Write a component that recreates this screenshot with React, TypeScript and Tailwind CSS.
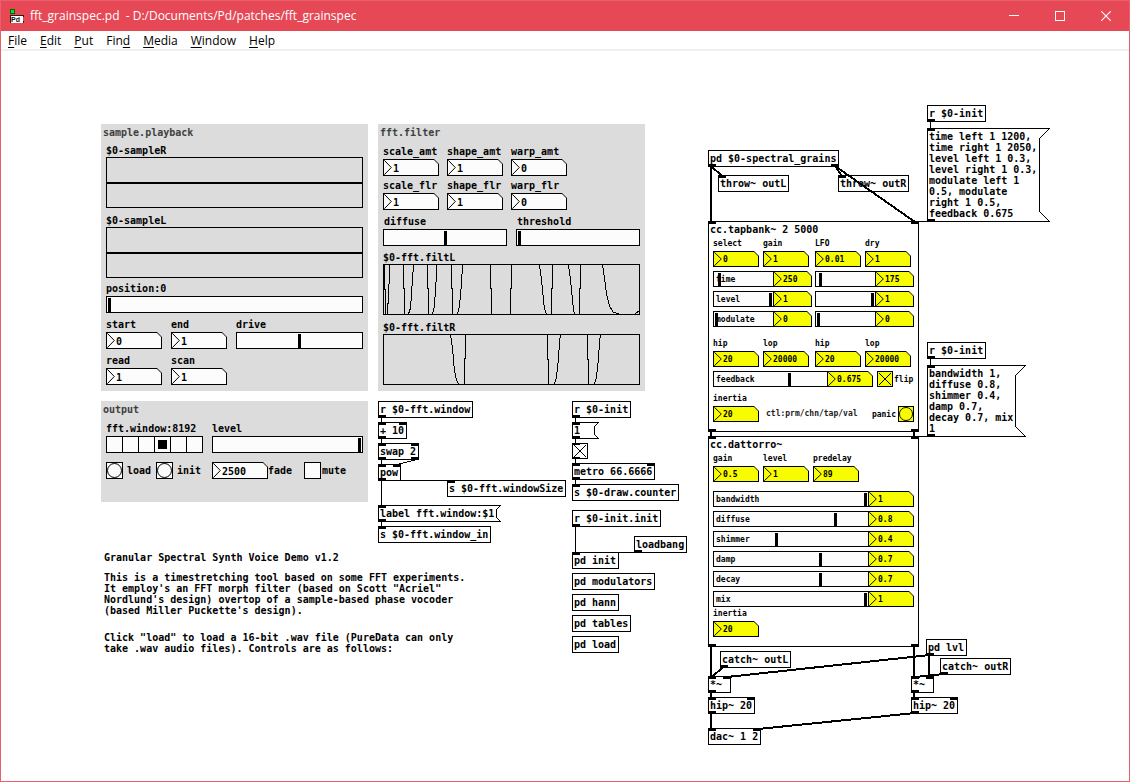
import { useId, type ReactNode } from "react";

type Tone = "plain" | "yellow";

const MENUS: [string, string, string][] = [
  ["", "F", "ile"],
  ["", "E", "dit"],
  ["", "P", "ut"],
  ["Fin", "d", ""],
  ["", "M", "edia"],
  ["", "W", "indow"],
  ["", "H", "elp"],
];

function AppIcon() {
  return (
    <svg width="14" height="15" viewBox="0 0 14 15" aria-hidden="true" shapeRendering="crispEdges">
      <rect x="0.5" y="0.5" width="4" height="4" fill="#00e800" stroke="#0b5c12" />
      <rect x="1" y="6" width="12" height="8" fill="#ffffff" />
      <path d="M0.5 14V6.500H13.5V8M13.500 12V14" fill="none" stroke="#2a1a1a" />
      <text x="1" y="13" fontSize="7" fontWeight="700" fontFamily="'Liberation Sans', sans-serif" fill="#111111">
        Pd
      </text>
    </svg>
  );
}

function TitleBar() {
  const control = "flex w-[46px] items-center justify-center";
  return (
    <header className="flex h-[30px] shrink-0 bg-[#e74856] text-white">
      <div className="flex min-w-0 flex-1 items-center gap-[6px] pl-[9px]">
        <AppIcon />
        <h1 className="truncate whitespace-pre text-[12px] leading-4">
          {"fft_grainspec.pd  - D:/Documents/Pd/patches/fft_grainspec"}
        </h1>
      </div>
      <button className={control} aria-label="Minimize">
        <svg width="10" height="10" stroke="white" shapeRendering="crispEdges">
          <path d="M0 4.500H10" />
        </svg>
      </button>
      <button className={control} aria-label="Maximize">
        <svg width="10" height="10" stroke="white" fill="none" shapeRendering="crispEdges">
          <rect x="0.5" y="0.5" width="9" height="9" />
        </svg>
      </button>
      <button className={control} aria-label="Close">
        <svg width="10" height="10" stroke="white" fill="none">
          <path d="M0.300 0.300L9.700 9.700M9.700 0.300L0.300 9.700" strokeWidth="1.100" />
        </svg>
      </button>
    </header>
  );
}

function MenuBar() {
  return (
    <nav className="flex h-5 shrink-0 items-center gap-[13px] border-b-2 border-[#f0f0f0] bg-white pl-[7px] pt-[2px] text-[12px] leading-4 text-black">
      {MENUS.map(([before, key, after]) => (
        <button key={before + key + after}>
          {before}
          <span className="underline underline-offset-2">{key}</span>
          {after}
        </button>
      ))}
    </nav>
  );
}

function Ports({ count, side }: { count: number; side: "in" | "out" }) {
  return (
    <span
      className={`pointer-events-none absolute -inset-x-px flex justify-between ${
        side === "in" ? "-top-px" : "-bottom-px"
      }`}
    >
      {Array.from({ length: count }, (_, i) => (
        <span key={i} className="h-[3px] w-2 bg-black" />
      ))}
    </span>
  );
}

interface ObjProps {
  at: string;
  ins?: number;
  outs?: number;
  children: ReactNode;
}

function Obj({ at, ins = 0, outs = 0, children }: ObjProps) {
  return (
    <div className={`absolute h-[17px] min-w-[23px] whitespace-nowrap border border-black pl-px pr-[2px] leading-[15px] ${at}`}>
      {children}
      <Ports count={ins} side="in" />
      <Ports count={outs} side="out" />
    </div>
  );
}

interface MsgProps {
  at: string;
  w: number;
  h: number;
  notch: number;
  children: ReactNode;
}

function Msg({ at, w, h, notch, children }: MsgProps) {
  const r = w - 0.5;
  const b = h - 0.5;
  return (
    <button className={`absolute border border-transparent text-left ${at}`}>
      <svg className="absolute -left-px -top-px" width={w} height={h} fill="none" stroke="black" shapeRendering="crispEdges">
        <path d={`M${r} 0.500H0.500V${b}H${r}L${r - notch} ${b - notch}V${notch + 0.5}Z`} />
      </svg>
      <span className="relative block whitespace-pre pl-px">{children}</span>
      <Ports count={1} side="in" />
      <span className="absolute -bottom-px -left-px h-[3px] w-2 bg-black" />
    </button>
  );
}

function NumberBox({ id, label, value, size, tone = "plain" }: { id?: string; label?: string; value: string; size: string; tone?: Tone }) {
  return (
    <span
      className={`relative block shrink-0 bg-black p-px [clip-path:polygon(0_0,calc(100%-5px)_0,100%_5px,100%_100%,0_100%)] ${size}`}
    >
      <span
        className={`flex h-full [clip-path:polygon(0_0,calc(100%-4px)_0,100%_4px,100%_100%,0_100%)] ${
          tone === "yellow" ? "bg-[#f8fc00]" : "bg-[#fcfcfc]"
        }`}
      >
        <svg className="h-full w-2 shrink-0" viewBox="0 0 8 15" preserveAspectRatio="none" fill="none" stroke="black" strokeWidth="1">
          <path d="M0.300 0.300L7.300 7.500L0.300 14.700" />
        </svg>
        <input
          id={id}
          aria-label={label}
          defaultValue={value}
          className="h-full w-full min-w-0 bg-transparent pl-px pt-px leading-none outline-none"
        />
      </span>
    </span>
  );
}

interface SliderProps {
  id?: string;
  label?: string;
  max: number;
  pos: number;
  small?: boolean;
}

function Slider({ id, label, max, pos, small = false }: SliderProps) {
  return (
    <input
      id={id}
      aria-label={label}
      type="range"
      min={0}
      max={max}
      defaultValue={pos}
      className={`m-0 block appearance-none border border-black bg-[#fcfcfc] [&::-webkit-slider-thumb]:w-[3px] [&::-webkit-slider-thumb]:appearance-none [&::-webkit-slider-thumb]:bg-black ${
        small
          ? "-mr-px h-4 min-w-0 flex-1 [&::-webkit-slider-thumb]:h-[13px]"
          : "h-[17px] w-full [&::-webkit-slider-thumb]:h-[14px]"
      }`}
    />
  );
}

function Toggle({ id, label, on = false, size, color }: { id?: string; label?: string; on?: boolean; size: string; color: string }) {
  return (
    <span className={`relative block shrink-0 ${size}`}>
      <input
        id={id}
        aria-label={label}
        type="checkbox"
        defaultChecked={on}
        className={`peer m-0 block size-full appearance-none border border-black ${color}`}
      />
      <svg
        className="pointer-events-none absolute inset-0 hidden size-full peer-checked:block"
        viewBox="0 0 16 16"
        stroke="black"
        shapeRendering="crispEdges"
      >
        <path d="M2 2L14 14M14 2L2 14" />
      </svg>
    </span>
  );
}

function Bang({ label, size, color }: { label: string; size: string; color: string }) {
  return (
    <button aria-label={label} className={`block shrink-0 border border-black ${size} ${color}`}>
      <svg className="block size-full" viewBox="0 0 15 15" fill="none" stroke="black">
        <circle cx="7.500" cy="7.500" r="7" />
      </svg>
    </button>
  );
}

interface FieldProps {
  label: string;
  children: (id: string) => ReactNode;
  className?: string;
  labelClass?: string;
}

function Field({ label, children, className = "", labelClass = "leading-[14px]" }: FieldProps) {
  const id = useId();
  return (
    <div className={className}>
      <label htmlFor={id} className={`block h-[14px] whitespace-nowrap ${labelClass}`}>
        {label}
      </label>
      {children(id)}
    </div>
  );
}

function NumField({ label, value }: { label: string; value: string }) {
  return (
    <Field label={label} className="w-14">
      {(id) => <NumberBox id={id} value={value} size="h-[17px] w-14" />}
    </Field>
  );
}

function SmallNum({ label, value }: { label: string; value: string }) {
  return (
    <Field label={label} className="flex w-[46px] flex-col gap-px" labelClass="leading-4">
      {(id) => <NumberBox id={id} value={value} size="h-4 w-[46px]" tone="yellow" />}
    </Field>
  );
}

function Panel({ title, at, children }: { title: string; at: string; children: ReactNode }) {
  return (
    <section className={`absolute w-[267px] bg-[#dcdcdc] px-[5px] ${at}`}>
      <h2 className="-ml-[3px] h-4 leading-[18px] text-[#404040]">{title}</h2>
      {children}
    </section>
  );
}

function ArrayPlot({ name, paths, className = "" }: { name: string; paths?: string; className?: string }) {
  return (
    <figure className={className}>
      <figcaption className="h-[14px] leading-4">{name}</figcaption>
      <div className="flex h-[51px] flex-col justify-center border border-black">
        {paths ? (
          <svg className="h-[49px] w-full" viewBox="1 1 255 49" preserveAspectRatio="none" fill="none" stroke="black" shapeRendering="crispEdges">
            <path d={paths} />
          </svg>
        ) : (
          <div className="h-[2px] bg-black" />
        )}
      </div>
    </figure>
  );
}

const FILT_L =
  "M1.500 1V25L2.500 26V50M4.500 50V41L5.500 38V22L6.500 18V1" +
  "M20.500 1V24L21.500 25V50M25.500 50L27.500 44L28.500 30L29.500 15L30.500 1" +
  "M44.500 1V24L45.500 25V50M49.500 50L51.500 42L52.500 24L53.500 12V1" +
  "M68.500 1V24L69.500 25V50M74.500 50L76.500 42L78.500 20L79.500 1" +
  "M107.500 1V24L108.500 25V50M127.500 50V25L128.500 24V1" +
  "M156.500 1L158.500 16L160.500 36L161.500 45L163.500 50M168.500 50V25L169.500 24V1" +
  "M185.500 1L187.500 16L189.500 36L190.500 45L191.500 50M196.500 50V25L197.500 24V1" +
  "M219.500 1L221.500 14L223.500 30L226.500 42L230.500 48.500L236 49.500M252.500 49.500L256 47";

const FILT_R =
  "M67.500 1L69.500 14L70.500 26L71.500 37L73.500 46L75.500 50M81.500 50V25L82.500 24V1" +
  "M164.500 1V25L165.500 26V50M171.500 50L173.500 43L175.500 24L176.500 8L177.500 1" +
  "M204.500 1V25L205.500 26V50M211.500 50L213.500 43L215.500 24L216.500 8L217.500 1";

function SamplePanel() {
  return (
    <Panel title="sample.playback" at="left-[100px] top-[73px] pb-[6px]">
      <ArrayPlot name="$0-sampleR" className="mt-[3px]" />
      <ArrayPlot name="$0-sampleL" className="mt-[5px]" />
      <Field label="position:0" className="mt-1">
        {(id) => <Slider id={id} max={252} pos={1} />}
      </Field>
      <div className="mt-[5px] flex gap-[9px]">
        <NumField label="start" value="0" />
        <NumField label="end" value="1" />
        <Field label="drive" className="min-w-0 flex-1">
          {(id) => <Slider id={id} max={122} pos={61} />}
        </Field>
      </div>
      <div className="mt-[5px] flex gap-[9px]">
        <NumField label="read" value="1" />
        <NumField label="scan" value="1" />
      </div>
    </Panel>
  );
}

function OutputPanel() {
  return (
    <Panel title="output" at="left-[100px] top-[350px] pb-[23px]">
      <div className="mt-[5px] grid grid-cols-[97px_1fr] gap-x-[9px] gap-y-[9px]">
        <fieldset>
          <legend className="leading-[14px]">fft.window:8192</legend>
          <div className="flex">
            {[256, 1024, 4096, 8192, 16384, 32768].map((n) => (
              <input
                key={n}
                type="radio"
                name="fft-window"
                aria-label={`window ${n}`}
                defaultChecked={n === 8192}
                className="-mr-px flex h-[17px] w-[17px] shrink-0 appearance-none items-center justify-center border border-black bg-[#fcfcfc] before:size-[9px] before:content-[''] checked:before:bg-black"
              />
            ))}
          </div>
        </fieldset>
        <Field label="level">{(id) => <Slider id={id} max={146} pos={145} />}</Field>
        <div className="grid grid-cols-[17px_25px_17px_1fr] items-center gap-1 whitespace-nowrap">
          <Bang label="load" size="size-[17px]" color="bg-[#fcfcfc]" />
          <span>load</span>
          <Bang label="init" size="size-[17px]" color="bg-[#fcfcfc]" />
          <span>init</span>
        </div>
        <div className="flex items-center">
          <NumberBox label="fade" value="2500" size="h-[17px] w-14" />
          <span className="w-9">fade</span>
          <Toggle id="mute" size="size-[17px]" color="bg-[#fcfcfc]" />
          <label htmlFor="mute" className="pl-px">mute</label>
        </div>
      </div>
    </Panel>
  );
}

function FilterPanel() {
  return (
    <Panel title="fft.filter" at="left-[377px] top-[73px] pb-[6px]">
      <div className="mt-[5px] flex gap-2">
        <NumField label="scale_amt" value="1" />
        <NumField label="shape_amt" value="1" />
        <NumField label="warp_amt" value="0" />
      </div>
      <div className="mt-[3px] flex gap-2">
        <NumField label="scale_flr" value="1" />
        <NumField label="shape_flr" value="1" />
        <NumField label="warp_flr" value="0" />
      </div>
      <div className="mt-[5px] grid grid-cols-2 gap-[9px]">
        <Field label="diffuse" labelClass="pl-px leading-[14px]">
          {(id) => <Slider id={id} max={119} pos={60} />}
        </Field>
        <Field label="threshold" labelClass="pl-px leading-[14px]">
          {(id) => <Slider id={id} max={119} pos={1} />}
        </Field>
      </div>
      <ArrayPlot name="$0-fft.filtL" paths={FILT_L} className="mt-1" />
      <ArrayPlot name="$0-fft.filtR" paths={FILT_R} className="mt-[5px]" />
    </Panel>
  );
}

interface MixRowProps {
  label: string;
  showLabel?: boolean;
  value: string;
  max: number;
  pos: number;
  box: string;
}

function MixRow({ label, showLabel = true, value, max, pos, box }: MixRowProps) {
  const id = useId();
  return (
    <div className="relative flex min-w-0 flex-1">
      <Slider id={id} label={showLabel ? undefined : label} max={max} pos={pos} small />
      {showLabel && (
        <label htmlFor={id} className="pointer-events-none absolute left-[3px] top-[2px] leading-[14px]">
          {label}
        </label>
      )}
      <NumberBox label={`${label} value`} value={value} size={box} tone="yellow" />
    </div>
  );
}

function Device({ title, at, children }: { title: string; at: string; children: ReactNode }) {
  return (
    <section className={`absolute w-[211px] border border-black bg-white px-1 pb-[9px] text-[8px] ${at}`}>
      <h2 className="-ml-[3px] h-[14px] text-[10px] leading-4">{title}</h2>
      {children}
      <Ports count={2} side="in" />
      <Ports count={2} side="out" />
    </section>
  );
}

function Tapbank() {
  const rows: [string, string, number, string, number][] = [
    ["time", "250", 4, "175", 3],
    ["level", "1", 55, "1", 55],
    ["modulate", "0", 1, "0", 1],
  ];
  return (
    <Device title="cc.tapbank~ 2 5000" at="left-[707px] top-[170px]">
      <div className="grid grid-cols-2 gap-x-[3px] gap-y-1">
        <div className="flex gap-1">
          <SmallNum label="select" value="0" />
          <SmallNum label="gain" value="1" />
        </div>
        <div className="flex gap-1">
          <SmallNum label="LFO" value="0.01" />
          <SmallNum label="dry" value="1" />
        </div>
        {rows.map(([label, left, leftPos, right, rightPos]) => [
          <MixRow key={label + "L"} label={label} value={left} max={56} pos={leftPos} box="h-4 w-[39px]" />,
          <MixRow key={label + "R"} label={label + " right"} showLabel={false} value={right} max={56} pos={rightPos} box="h-4 w-[39px]" />,
        ])}
        <div className="mt-[5px] flex gap-1">
          <SmallNum label="hip" value="20" />
          <SmallNum label="lop" value="20000" />
        </div>
        <div className="mt-[5px] flex gap-1">
          <SmallNum label="hip" value="20" />
          <SmallNum label="lop" value="20000" />
        </div>
      </div>
      <div className="mt-1 flex items-center">
        <MixRow label="feedback" value="0.675" max={110} pos={74} box="h-4 w-[46px]" />
        <div className="ml-1 flex w-[37px] items-center gap-px">
          <Toggle id="flip" on size="size-4" color="bg-[#f8fc00]" />
          <label htmlFor="flip">flip</label>
        </div>
      </div>
      <div className="mt-1 flex items-end">
        <SmallNum label="inertia" value="20" />
        <span className="ml-[7px] leading-4 text-[#202020]">ctl:prm/chn/tap/val</span>
        <div className="ml-auto flex items-center gap-[2px]">
          <span>panic</span>
          <Bang label="panic" size="size-4" color="bg-[#f8fc00]" />
        </div>
      </div>
    </Device>
  );
}

function Dattorro() {
  const rows: [string, string, number][] = [
    ["bandwidth", "1", 150],
    ["diffuse", "0.8", 120],
    ["shimmer", "0.4", 61],
    ["damp", "0.7", 105],
    ["decay", "0.7", 105],
    ["mix", "1", 150],
  ];
  return (
    <Device title="cc.dattorro~" at="left-[707px] top-[385px]">
      <div className="flex gap-1">
        <SmallNum label="gain" value="0.5" />
        <SmallNum label="level" value="1" />
        <SmallNum label="predelay" value="89" />
      </div>
      <div className="mt-[9px] flex flex-col gap-1">
        {rows.map(([label, value, pos]) => (
          <MixRow key={label} label={label} value={value} max={151} pos={pos} box="h-4 w-[46px]" />
        ))}
      </div>
      <Field label="inertia">
        {(id) => <NumberBox id={id} value="20" size="h-4 w-[46px]" tone="yellow" />}
      </Field>
    </Device>
  );
}

function Cords() {
  return (
    <svg className="pointer-events-none absolute inset-0 h-full w-full" fill="none" stroke="black" shapeRendering="crispEdges">
      <path d="M380.500 366V371M380.500 387V392M380.500 408V413M414 409L396 413.500M380.500 429V454M380 429.500H450M380.500 470V475" />
      <path d="M574.500 366V371M574.500 387V392M574.500 408V412M574.500 429V433M574.500 475V501M574 501.500H640" />
      <path d="M929.500 70V77M929.500 307V315M911 170.500H930M911 385.500H930" />
      <g strokeWidth="2">
        <path d="M710 115V171M710 115L721 125M834 115L841 125M834 115L914 171" />
        <path d="M710 380V386M913 380V386" />
        <path d="M710 595V626M722 616L711 626M929 604L726 626M928 604V626M943 623L914 626M913 595V626" />
        <path d="M710 642V647M913 642V647M710 662V678M914 662L757 678" />
      </g>
    </svg>
  );
}

function Patch() {
  return (
    <main className="relative flex-1 overflow-auto bg-white font-['DejaVu_Sans_Mono',monospace] text-[10px] font-bold leading-[15px] text-black">
      <SamplePanel />
      <OutputPanel />
      <FilterPanel />

      <Obj at="left-[377px] top-[350px]" outs={1}>r $0-fft.window</Obj>
      <Obj at="left-[377px] top-[371px]" ins={2} outs={1}>+ 10</Obj>
      <Obj at="left-[377px] top-[392px]" ins={2} outs={2}>swap 2</Obj>
      <Obj at="left-[377px] top-[413px]" ins={2} outs={1}>pow</Obj>
      <Obj at="left-[446px] top-[429px]" ins={1}>s $0-fft.windowSize</Obj>
      <Msg at="left-[377px] top-[454px] h-[17px] w-[123px]" w={123} h={17} notch={4}>label fft.window:$1</Msg>
      <Obj at="left-[377px] top-[475px]" ins={1}>s $0-fft.window_in</Obj>

      <Obj at="left-[571px] top-[350px]" outs={1}>r $0-init</Obj>
      <Msg at="left-[571px] top-[371px] h-[17px] w-[27px]" w={27} h={17} notch={4}>1</Msg>
      <div className="absolute left-[571px] top-[392px] border border-transparent">
        <div className="-m-px">
          <Toggle label="metro on" on size="size-4" color="bg-white" />
        </div>
        <span className="pointer-events-none absolute -left-px -top-px h-[2px] w-2 bg-black" />
        <span className="pointer-events-none absolute -bottom-px -left-px h-[2px] w-2 bg-black" />
      </div>
      <Obj at="left-[571px] top-[412px]" ins={2} outs={1}>metro 66.6666</Obj>
      <Obj at="left-[571px] top-[433px]" ins={1}>s $0-draw.counter</Obj>
      <Obj at="left-[571px] top-[459px]" outs={1}>r $0-init.init</Obj>
      <Obj at="left-[633px] top-[485px]" outs={1}>loadbang</Obj>
      <Obj at="left-[571px] top-[501px]" ins={1}>pd init</Obj>
      <Obj at="left-[571px] top-[522px]">pd modulators</Obj>
      <Obj at="left-[571px] top-[543px]">pd hann</Obj>
      <Obj at="left-[571px] top-[564px]">pd tables</Obj>
      <Obj at="left-[571px] top-[585px]">pd load</Obj>

      <Obj at="left-[707px] top-[99px]" outs={2}>pd $0-spectral_grains</Obj>
      <Obj at="left-[717px] top-[124px]" ins={1}>throw~ outL</Obj>
      <Obj at="left-[837px] top-[124px]" ins={1}>throw~ outR</Obj>
      <Tapbank />
      <Dattorro />

      <Obj at="left-[926px] top-[54px]" outs={1}>r $0-init</Obj>
      <Msg at="left-[926px] top-[77px] h-[94px] w-[123px] leading-[11px]" w={123} h={94} notch={10}>
        {"time left 1 1200,\ntime right 1 2050,\nlevel left 1 0.3,\nlevel right 1 0.3,\nmodulate left 1\n0.5, modulate\nright 1 0.5,\nfeedback 0.675"}
      </Msg>
      <Obj at="left-[926px] top-[291px]" outs={1}>r $0-init</Obj>
      <Msg at="left-[926px] top-[314px] h-[72px] w-[99px] leading-[11px]" w={99} h={72} notch={10}>
        {"bandwidth 1,\ndiffuse 0.8,\nshimmer 0.4,\ndamp 0.7,\ndecay 0.7, mix\n1"}
      </Msg>

      <Obj at="left-[925px] top-[588px]" outs={1}>pd lvl</Obj>
      <Obj at="left-[719px] top-[600px]" outs={1}>catch~ outL</Obj>
      <Obj at="left-[939px] top-[607px]" outs={1}>catch~ outR</Obj>
      <Obj at="left-[707px] top-[625px]" ins={2} outs={1}>*~</Obj>
      <Obj at="left-[910px] top-[625px]" ins={2} outs={1}>*~</Obj>
      <Obj at="left-[707px] top-[646px]" ins={2} outs={1}>hip~ 20</Obj>
      <Obj at="left-[910px] top-[646px]" ins={2} outs={1}>hip~ 20</Obj>
      <Obj at="left-[707px] top-[677px]" ins={2}>dac~ 1 2</Obj>

      <article className="absolute left-[103px] top-[501px] flex flex-col whitespace-pre leading-[11px]">
        <h2>Granular Spectral Synth Voice Demo v1.2</h2>
        <p className="mt-[9px]">
          {"This is a timestretching tool based on some FFT experiments.\nIt employ's an FFT morph filter (based on Scott \"Acriel\"\nNordlund's design) overtop of a sample-based phase vocoder\n(based Miller Puckette's design)."}
        </p>
        <p className="mt-4">
          {"Click \"load\" to load a 16-bit .wav file (PureData can only\ntake .wav audio files). Controls are as follows:"}
        </p>
      </article>
      <Cords />
    </main>
  );
}

export default function App() {
  return (
    <div className="flex h-screen flex-col border border-[#e95f6b] bg-white font-['Open_Sans','Noto_Sans',sans-serif]">
      <TitleBar />
      <MenuBar />
      <Patch />
    </div>
  );
}
